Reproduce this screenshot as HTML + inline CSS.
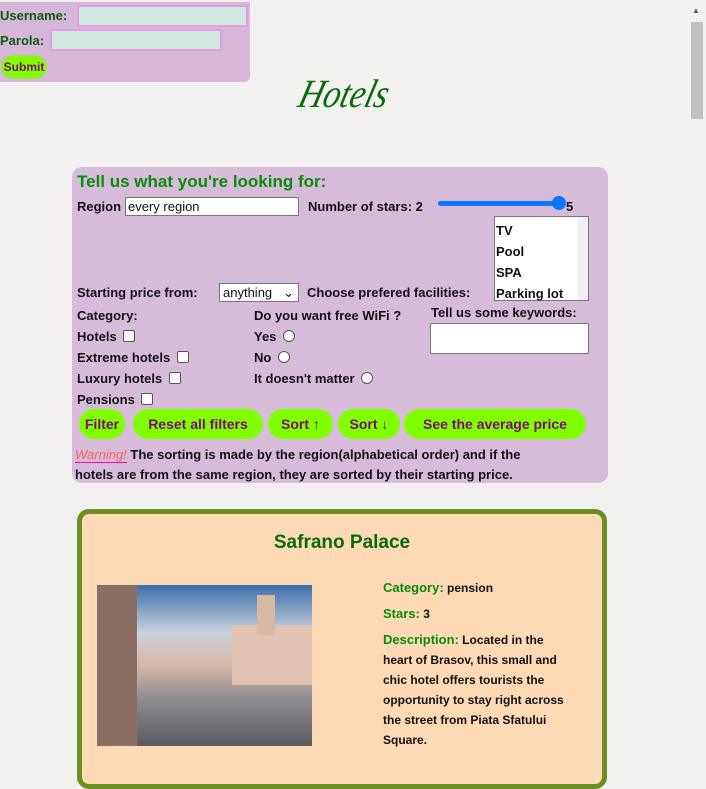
<!DOCTYPE html>
<html><head><meta charset="utf-8"><style>
*{box-sizing:border-box}
body{margin:0;width:706px;height:773px;overflow:hidden;background:#f3f1f0;font-family:"Liberation Sans",sans-serif;font-weight:bold;font-size:13px;color:#111;position:relative}
.a{position:absolute;white-space:nowrap}
.login{left:0;top:2px;width:250px;height:80px;background:#d6b7da;border-radius:0 0 6px 0}
.inp{position:absolute;background:#cfe8e0;border:2px solid #e59be3}
.g{color:#0a5a0a}
.panel{left:72px;top:167px;width:536px;height:316px;background:#d6bcd9;border-radius:10px}
.btn{position:absolute;top:409px;height:30px;background:#80ff00;border-radius:15px;color:#7a0a7a;font-size:14px;line-height:30px;text-align:center}
.cb{display:inline-block;width:12px;height:12px;border:1px solid #555;background:#fff;border-radius:2px;vertical-align:-1px;margin-left:3px}
.rb{display:inline-block;width:12px;height:12px;border:1px solid #555;background:#fff;border-radius:50%;vertical-align:-1px;margin-left:3px}
.card{left:77px;top:509px;width:530px;height:280px;background:#fed9b6;border:5px solid #6b8e23;border-radius:12px}
.lab{color:#0a8a0a}
</style></head><body>
<div class="a login"></div>
<div class="a g" style="left:0;top:8px;font-size:13px">Username:</div>
<div class="inp" style="left:77px;top:5px;width:171px;height:22px"></div>
<div class="a g" style="left:0;top:33px">Parola:</div>
<div class="inp" style="left:50px;top:29px;width:172px;height:22px"></div>
<div class="a" style="left:1px;top:55px;width:46px;height:24px;background:#80ff00;border:2px solid #9be63a;border-radius:12px;color:#7a0a7a;font-size:12px;line-height:20px;text-align:center">Submit</div>
<div class="a" style="left:300px;top:70px;font-family:'Liberation Serif',serif;font-style:italic;font-weight:normal;font-size:40px;color:#0a6a0a;transform:skewX(-15deg) scaleX(0.85);transform-origin:left">Hotels</div>

<div class="a panel"></div>
<div class="a" style="left:77px;top:172px;font-size:17px;color:#0a8a0a">Tell us what you're looking for:</div>
<div class="a" style="left:77px;top:199px">Region</div>
<div class="a" style="left:125px;top:197px;width:174px;height:19px;background:#fff;border:1px solid #777;font-weight:normal;font-size:13px;padding-left:2px;line-height:17px">every region</div>
<div class="a" style="left:308px;top:199px">Number of stars: 2</div>
<div class="a" style="left:438px;top:201px;width:124px;height:5px;background:#0a75ff;border-radius:3px"></div>
<div class="a" style="left:552px;top:196px;width:14px;height:14px;background:#0a75ff;border-radius:50%"></div>
<div class="a" style="left:566px;top:199px">5</div>
<div class="a" style="left:494px;top:216px;width:95px;height:85px;background:#fff;border:1px solid #777"></div>
<div class="a" style="left:577px;top:217px;width:11px;height:83px;background:#f0f0f0"></div>
<div class="a" style="left:496px;top:220px;line-height:21px;white-space:normal">TV<br>Pool<br>SPA<br>Parking lot</div>
<div class="a" style="left:77px;top:285px">Starting price from:</div>
<div class="a" style="left:219px;top:283px;width:80px;height:19px;background:#fff;border:1px solid #777;font-weight:normal;padding-left:3px;line-height:17px">anything <span style="position:absolute;right:4px">⌄</span></div>
<div class="a" style="left:307px;top:285px">Choose prefered facilities:</div>
<div class="a" style="left:77px;top:305px;line-height:21px">Category:<br>Hotels <span class="cb"></span><br>Extreme hotels <span class="cb"></span><br>Luxury hotels <span class="cb"></span><br>Pensions <span class="cb"></span></div>
<div class="a" style="left:254px;top:305px;line-height:21px">Do you want free WiFi ?<br>Yes <span class="rb"></span><br>No <span class="rb"></span><br>It doesn't matter <span class="rb"></span></div>
<div class="a" style="left:431px;top:305px">Tell us some keywords:</div>
<div class="a" style="left:430px;top:323px;width:159px;height:31px;background:#fff;border:1px solid #777;border-radius:2px"></div>
<div class="btn" style="left:79px;width:46px">Filter</div>
<div class="btn" style="left:133px;width:130px">Reset all filters</div>
<div class="btn" style="left:268px;width:65px">Sort ↑</div>
<div class="btn" style="left:338px;width:62px">Sort ↓</div>
<div class="btn" style="left:404px;width:182px">See the average price</div>
<div class="a" style="left:75px;top:445px;line-height:20px"><span style="color:#ff6060;font-weight:normal;font-style:italic;border-bottom:1px solid #f0a">Warning!</span> The sorting is made by the region(alphabetical order) and if the<br>hotels are from the same region, they are sorted by their starting price.</div>

<div class="a card"></div>
<div class="a" style="left:77px;width:530px;top:532px;text-align:center;font-size:19px;color:#0a6a0a">Safrano Palace</div>
<div class="a" style="left:97px;top:585px;width:215px;height:161px;background:linear-gradient(180deg,#3d6fa8 0%,#c9d3de 30%,#d8b7a4 50%,#8d8f95 70%,#5b5a5e 100%)">
<div style="position:absolute;left:0;top:0;width:40px;height:161px;background:#8a6f64"></div>
<div style="position:absolute;left:135px;top:40px;width:80px;height:60px;background:#e2c3b1"></div>
<div style="position:absolute;left:160px;top:10px;width:18px;height:40px;background:#d9b8a4"></div>
</div>
<div class="a" style="left:383px;top:578px;line-height:20px;font-size:12px"><span class="lab" style="font-size:13px">Category:</span> pension<br><div style="height:6px"></div><span class="lab" style="font-size:13px">Stars:</span> 3<br><div style="height:6px"></div><span class="lab" style="font-size:13px">Description:</span> Located in the<br>heart of Brasov, this small and<br>chic hotel offers tourists the<br>opportunity to stay right across<br>the street from Piata Sfatului<br>Square.</div>

<div class="a" style="left:689px;top:0;width:17px;height:773px;background:#f1f1f1"></div>
<div class="a" style="left:691px;top:22px;width:12px;height:97px;background:#c1c1c1"></div>
<div class="a" style="left:692px;top:6px;font-size:8px;color:#555">▲</div>
</body></html>
